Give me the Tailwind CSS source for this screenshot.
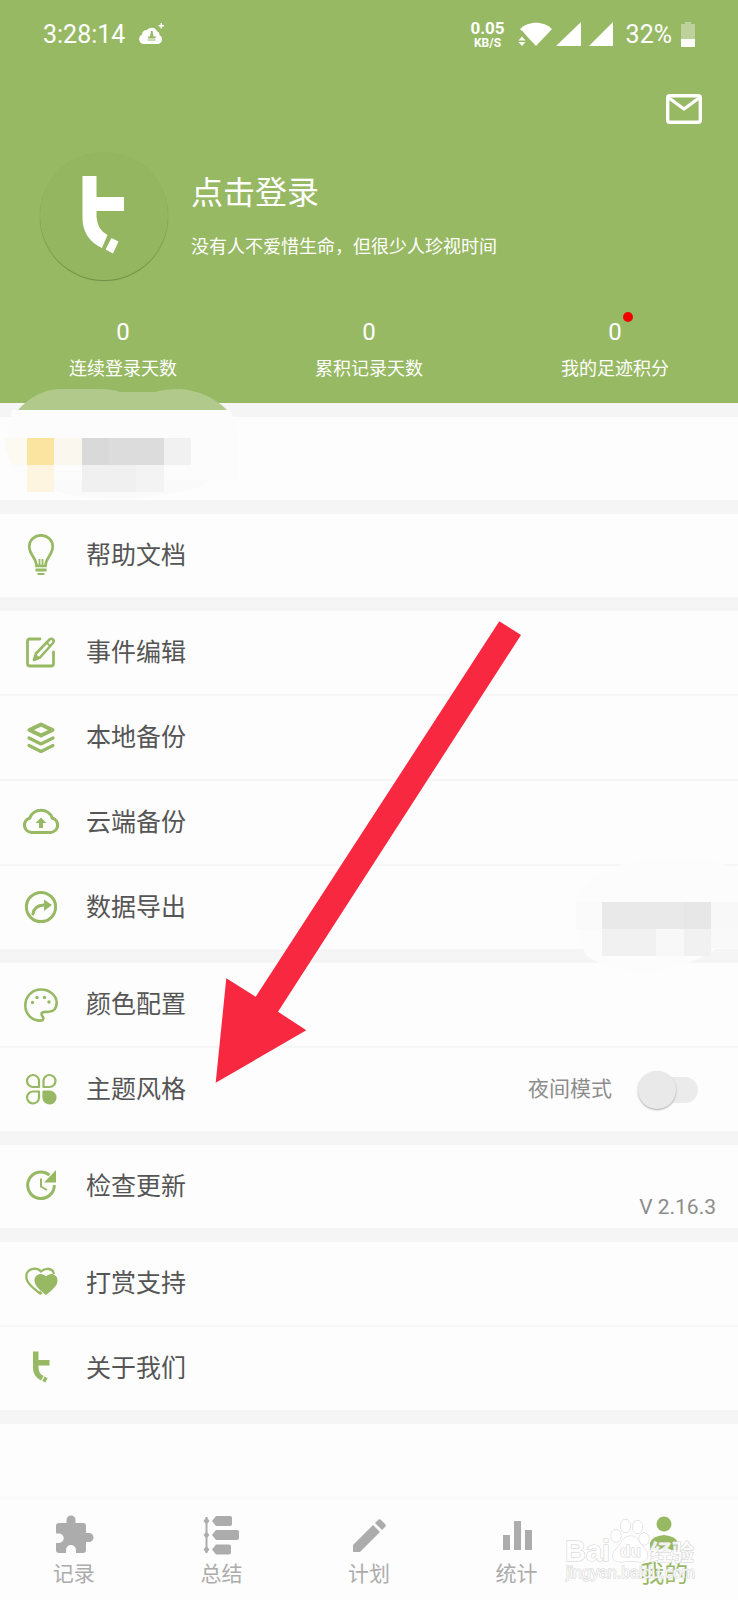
<!DOCTYPE html>
<html lang="zh-CN">
<head>
<meta charset="utf-8">
<meta name="viewport" content="width=device-width, initial-scale=1">
<title>我的</title>
<script src="https://cdn.jsdelivr.net/npm/@tailwindcss/browser@4"></script>
</head>
<body class="relative flex min-h-screen flex-col overflow-x-hidden bg-[#f5f5f5] font-['Roboto','Noto_Sans_CJK_SC',sans-serif] text-[#555]">

<header class="bg-[#98b964] pb-[21px] text-white">
  <div class="flex h-[68px] items-center justify-between pr-[43px] pl-[43px] text-[25px] leading-none">
    <div class="flex items-center gap-[14px]">
      <span>3:28:14</span>
      <svg class="h-[22px] w-[26px]" viewBox="0 0 26 22" fill="#fff" aria-hidden="true">
        <path d="M5 21a5 5 0 0 1-2-9.500A5 5 0 0 1 8 7a6 6 0 0 1 10 1 4 4 0 0 1 2.500 4A5 5 0 0 1 20 21z"/>
        <path d="M21.500 0h1.500v2h2v1.500h-2v2h-1.500v-2h-2V2h2z"/>
        <path d="M12 8h1.500l1 5.500h3l-1.500 2h-6.500l-1-2h2.500z M8.500 16.500h8v1h-8z" fill="#98b964"/>
      </svg>
    </div>
    <div class="flex items-center">
      <div class="flex flex-col items-center font-bold">
        <span class="text-[17px] leading-[18px]">0.05</span>
        <span class="text-[12px] leading-[12px]">KB/S</span>
      </div>
      <svg class="ml-[13px] h-[24px] w-[96px]" viewBox="0 0 96 24" fill="#fff" aria-hidden="true">
        <path d="M2 7C10-1.500 26-1.500 34 7L18 24z"/>
        <path d="M-1 15.500l5-7 6 7.500v8H-1z" fill="#98b964"/>
        <path d="M.5 18.500L4 14.500l3.500 4zM.5 20h7L4 24z"/>
        <path d="M63 0v24H38zM95 0v24H71z"/>
      </svg>
      <span class="ml-[12px]">32%</span>
      <svg class="ml-[9px] h-[25px] w-[14px]" viewBox="0 0 14 25" aria-hidden="true">
        <path d="M0 3q0-1 1-1h3V0h6v2h3q1 0 1 1v15H0z" fill="#bdd29b"/>
        <path d="M0 17h14v8H0z" fill="#fff"/>
      </svg>
    </div>
  </div>

  <div class="flex justify-end pt-[26px] pr-[36px]">
    <button type="button" aria-label="消息">
      <svg class="block h-[30px] w-[36px]" viewBox="0 0 36 30" fill="none" stroke="#fff" stroke-width="3.400" stroke-linejoin="round" aria-hidden="true">
        <rect x="1.700" y="1.700" width="32.600" height="26.600" rx="2"/>
        <path d="M3 4l15 11L33 4"/>
      </svg>
    </button>
  </div>

  <div class="mt-[28px] flex items-center gap-[23px] pl-[40px]">
    <svg class="h-[128px] w-[128px] rounded-full bg-[#95b661] shadow-[0_1px_1px_#6f8c42]" viewBox="0 0 128 128" aria-hidden="true">
      <path d="M42.500 24h14v21h27.500v14H56.500v6q1 13 11 18L62 96Q43 87 42.500 67zM71.500 86l7 3.500-5.500 12-7.500-4z" fill="#fff"/>
    </svg>
    <div class="flex flex-col gap-[18px]">
      <a href="#login" class="text-[32px] leading-[44px]">点击登录</a>
      <p class="text-[18px] leading-[28px]">没有人不爱惜生命，但很少人珍视时间</p>
    </div>
  </div>

  <dl class="mt-[36px] grid grid-cols-3 text-center">
    <div class="flex flex-col-reverse gap-[8px]">
      <dt class="text-[18px] leading-[26px]">连续登录天数</dt>
      <dd class="text-[24px] leading-[32px]">0</dd>
    </div>
    <div class="flex flex-col-reverse gap-[8px]">
      <dt class="text-[18px] leading-[26px]">累积记录天数</dt>
      <dd class="text-[24px] leading-[32px]">0</dd>
    </div>
    <div class="flex flex-col-reverse gap-[8px]">
      <dt class="text-[18px] leading-[26px]">我的足迹积分</dt>
      <dd class="text-[24px] leading-[32px]"><span class="relative">0<i class="absolute -top-[6px] -right-[11px] h-[10px] w-[10px] rounded-full bg-[#f00000]"></i></span></dd>
    </div>
  </dl>
</header>

<main class="flex flex-1 flex-col gap-[14px] pt-[14px] text-[25px]">

  <section class="relative h-[83px] bg-[#fdfdfd]">
    <svg class="absolute -top-[28px] left-0 h-[116px] w-[245px]" viewBox="0 0 245 116" aria-hidden="true">
      <path d="M12 21h218q3 5 8 20v50H35Q14 84 8 72V50z" fill="#fcfcfc"/>
      <path d="M35 91h175l-12 8q-50 11-80 10-60 1-83-18z" fill="#fafafa"/>
      <path d="M18 21Q35 2 58 0h40q15 0 22 3h35q10-3 26-3 28 3 46 21z" fill="#b1ca8b"/>
      <g shape-rendering="crispEdges">
        <path d="M5 49h22v27H14q-6-8-9-14z" fill="#fdfaf3"/>
        <path d="M27 49h27v27H27z" fill="#fbe4a0"/>
        <path d="M54 49h28v27H54z" fill="#faf8ee"/>
        <path d="M82 49h27v27H82z" fill="#d9d9d9"/>
        <path d="M109 49h55v27h-55z" fill="#dcdcdc"/>
        <path d="M164 49h27v27h-27z" fill="#f1f1f1"/>
        <path d="M27 76h27v27H27z" fill="#fdf5df"/>
        <path d="M82 76h54v27H82z" fill="#f0f0f0"/>
        <path d="M136 76h28v27h-28z" fill="#f3f3f3"/>
      </g>
    </svg>
  </section>

  <section class="bg-[#fdfdfd]">
    <a href="#help" class="flex h-[83px] items-center gap-[23px] pl-[19px]">
      <svg class="h-[44px] w-[44px]" viewBox="0 0 44 44" fill="none" stroke="#98b964" stroke-width="2.700" aria-hidden="true">
        <path d="M17.500 32C17.500 24 10.300 21 10.300 12.500a11.700 11.200 0 0 1 23.400 0C33.700 21 26.500 24 26.500 32z"/>
        <path d="M20.500 25v7M23.500 25v7" stroke-width="1.800"/>
        <path d="M16.500 36h11" stroke-width="3"/><path d="M18.500 40h7" stroke-width="2"/>
      </svg>
      <span>帮助文档</span>
    </a>
  </section>

  <section class="relative bg-[#fdfdfd]">
    <div class="divide-y-2 divide-[#f6f6f6]">
      <a href="#events" class="box-content flex h-[83px] items-center gap-[23px] pl-[19px]">
        <svg class="h-[44px] w-[44px]" viewBox="0 0 44 44" fill="none" stroke="#98b964" stroke-width="2.800" stroke-linecap="round" stroke-linejoin="round" aria-hidden="true">
          <path d="M21 8H11Q8.500 8 8.500 10.500v22q0 2.500 2.500 2.500h21q2.500 0 2.500-2.500V21"/>
          <path d="M15 29l2-6.500L30.500 8.500q2-1.500 3.500 0t0 3.500L21 26.500z" stroke-width="2.600"/>
          <path d="M15 29l2-5 3 3z" stroke-width="1.500" fill="#98b964"/>
          <path d="M28 12l3 3" stroke-width="1.800"/>
        </svg>
        <span>事件编辑</span>
      </a>
      <a href="#local" class="box-content flex h-[83px] items-center gap-[23px] pl-[19px]">
        <svg class="h-[44px] w-[44px]" viewBox="0 0 44 44" fill="none" stroke="#98b964" stroke-width="4" stroke-linejoin="round" aria-hidden="true">
          <path d="M22 8.500L33.500 14 22 19.500 10.500 14z"/>
          <path d="M10 22l12 6 12-6M10 29.500l12 6 12-6" stroke-linecap="round" stroke-width="3.200"/>
        </svg>
        <span>本地备份</span>
      </a>
      <a href="#cloud" class="box-content flex h-[83px] items-center gap-[23px] pl-[19px]">
        <svg class="h-[44px] w-[44px]" viewBox="0 0 44 44" fill="none" stroke="#98b964" stroke-width="3" aria-hidden="true">
          <path d="M13 31.500a7.500 7.500 0 0 1-1.500-14.500 11 11 0 0 1 21 0A7.500 7.500 0 0 1 31 31.500z" transform="translate(-1.500 0) scale(1.070 1)"/>
          <path d="M22 16.500l5.500 5.500h-3.500v5h-4v-5h-3.500z" fill="#98b964" stroke="none"/>
        </svg>
        <span>云端备份</span>
      </a>
      <a href="#export" class="box-content flex h-[83px] items-center gap-[23px] pl-[19px]">
        <svg class="h-[44px] w-[44px]" viewBox="0 0 44 44" fill="none" stroke="#98b964" stroke-width="3" aria-hidden="true">
          <circle cx="22" cy="21" r="14.600"/>
          <path d="M14 28q1-8.500 11-9" stroke-linecap="round"/>
          <path d="M25 13.500l8 5.500-8 6z" fill="#98b964" stroke="none"/>
        </svg>
        <span>数据导出</span>
      </a>
    </div>
    <svg class="absolute right-0 -bottom-[26px] h-[116px] w-[190px]" viewBox="0 0 190 116" aria-hidden="true">
      <path d="M28 42Q40 12 90 2h70q20 3 30 8v80h-22q-30 20-70 22Q58 112 38 96q-8-14-10-48z" fill="#fcfcfc"/>
      <g shape-rendering="crispEdges">
        <path d="M28 43h26v28H28z" fill="#fafafa"/>
        <path d="M54 43h82v27H54z" fill="#e9e9e9"/><path d="M136 43h27v27h-27z" fill="#e7e7e7"/>
        <path d="M163 43h27v27h-27z" fill="#f8f8f8"/>
        <path d="M54 70h54v27H54zM136 70h27v27h-27z" fill="#f1f1f1"/>
        <path d="M108 70h28v27h-28z" fill="#f8f8f8"/><path d="M163 70h27v19h-27z" fill="#f9f9f9"/>
      </g>
    </svg>
  </section>

  <section class="divide-y-2 divide-[#f6f6f6] bg-[#fdfdfd]">
    <a href="#colors" class="box-content flex h-[83px] items-center gap-[23px] pl-[19px]">
      <svg class="h-[44px] w-[44px]" viewBox="0 0 44 44" fill="none" stroke="#98b964" stroke-width="2.600" stroke-linejoin="round" aria-hidden="true">
        <path d="M23 37.500C13 38.500 6.300 31 6.300 22.500 6.300 13.500 13 6.500 22 6.500S37.700 13 37.700 20q0 8.500-8.700 9-6-.5-6.500 1.500 0 2 1.500 3.500 1 2.500-1 3.500z"/>
        <g fill="#98b964" stroke="none"><circle cx="13.500" cy="19.500" r="1.700"/><circle cx="18" cy="14.500" r="1.700"/><circle cx="25.500" cy="14.500" r="1.700"/><circle cx="30" cy="19" r="1.700"/></g>
      </svg>
      <span>颜色配置</span>
    </a>
    <div class="box-content flex h-[83px] items-center gap-[23px] pl-[19px]">
      <svg class="h-[44px] w-[44px]" viewBox="0 0 44 44" fill="none" stroke="#98b964" stroke-width="2.200" stroke-linejoin="round" aria-hidden="true">
        <path d="M20 19h-6A6 6 0 1 1 20 12.500z"/>
        <path d="M24.500 19h6A6 6 0 1 0 24.500 12.500z"/>
        <path d="M20 23.500h-6A6 6 0 1 0 20 30z"/>
        <path d="M24.500 23.500h6A6 6 0 1 1 24.500 30z" fill="#98b964"/>
      </svg>
      <a href="#theme">主题风格</a>
      <label class="mr-[40px] ml-auto flex items-center gap-[26px] text-[21px] text-[#8c8c8c]">
        夜间模式
        <input type="checkbox" role="switch" class="relative h-[26px] w-[60px] appearance-none before:absolute before:inset-y-0 before:right-0 before:w-[48px] before:rounded-full before:bg-[#ebebeb] after:absolute after:-top-[6px] after:left-0 after:h-[38px] after:w-[38px] after:rounded-full after:bg-[#e9e9e9] after:shadow-[0_1px_2px_#aaa]">
      </label>
    </div>
  </section>

  <section class="bg-[#fdfdfd]">
    <a href="#update" class="flex h-[83px] items-center gap-[23px] pl-[19px]">
      <svg class="h-[44px] w-[44px]" viewBox="0 0 44 44" fill="none" stroke="#98b964" stroke-width="3" aria-hidden="true">
        <path d="M30.500 10A13.300 13.300 0 1 0 35.300 20"/>
        <path d="M37 5v12.500H25z" fill="#98b964" stroke="none"/>
        <path d="M22 13.500v8l6 3.500" stroke-width="2"/>
      </svg>
      <span>检查更新</span>
      <span class="mr-[22px] ml-auto self-end pb-[6px] text-[21px] leading-[30px] text-[#8c8c8c]">V 2.16.3</span>
    </a>
  </section>

  <section class="divide-y-2 divide-[#f6f6f6] bg-[#fdfdfd]">
    <a href="#donate" class="box-content flex h-[83px] items-center gap-[23px] pl-[19px]">
      <svg class="h-[44px] w-[44px]" viewBox="0 0 44 44" aria-hidden="true">
        <path d="M21 31.500C14 26 7.300 21 7.300 14.500 7.300 7 17 4 22 9.500 27 5 34 6.500 35 12" fill="none" stroke="#98b964" stroke-width="2.300"/>
        <path d="M27 33C21 28 15.500 24 15.500 18.500c0-7 8-8.500 11.500-4 3.500-4.500 11.500-3 11.500 4C38.500 24 33 28 27 33z" fill="#98b964"/>
        <path d="M19.500 31l1.500-2.500 2.500 3-2 1.500z" fill="#98b964"/>
      </svg>
      <span>打赏支持</span>
    </a>
    <a href="#about" class="box-content flex h-[83px] items-center gap-[23px] pl-[19px]">
      <svg class="h-[44px] w-[44px]" viewBox="0 0 44 44" fill="#98b964" aria-hidden="true">
        <path d="M14 4.500h5.500V13h11v5.500h-11v2q0 6 5 8.500L22 33.500q-8-4-8-12.500zM25.500 29.500l3 1.500-2.200 4.500-3-1.500z"/>
      </svg>
      <span>关于我们</span>
    </a>
  </section>

  <div class="flex-1 bg-[#fdfdfd]"></div>
</main>

<nav class="grid grid-cols-5 border-t-4 border-[#fafafa] bg-[#fdfdfd] pt-[14px] pb-[10px] text-[21px] leading-[32px] text-[#acacac]">
  <a href="#record" class="flex flex-col items-center">
    <svg class="h-[44px] w-[44px]" viewBox="0 0 44 44" fill="currentColor" aria-hidden="true">
      <path d="M4 12q0-3 3-3h7.500V6a4.500 4.500 0 0 1 9 0v3H31q3 0 3 3v7h3a4.500 4.500 0 0 1 0 9h-3v8q0 3-3 3h-7v-3a5 5 0 0 0-10 0v3H7q-3 0-3-3v-7h3a4.500 4.500 0 0 0 0-9.500H4z"/>
    </svg>
    记录
  </a>
  <a href="#summary" class="flex flex-col items-center">
    <svg class="h-[44px] w-[44px]" viewBox="0 0 44 44" fill="currentColor" aria-hidden="true">
      <path d="M6.500 3h2v36h-2z"/><path d="M7.500 3l3 4-3 3.500L4.500 7zM7.500 17.500l3 3.500-3 3.500-3-3.500zM7.500 32l3 3.500-3 3.500-3-3.500z"/>
      <path d="M13 7l4-5h14q2 0 2 2v6q0 2-2 2H17zM13 21l4-5h21q2 0 2 2v6q0 2-2 2H17zM13 35.500l4-5h13q2 0 2 2v6q0 2-2 2H17z"/>
    </svg>
    总结
  </a>
  <a href="#plan" class="flex flex-col items-center">
    <svg class="h-[44px] w-[44px]" viewBox="0 0 44 44" fill="currentColor" aria-hidden="true">
      <path d="M6 31L26 11l7 7-20 20H6z"/><path d="M28 9l3-3q1.500-1.500 3 0l4 4q1.500 1.500 0 3l-3 3z"/>
    </svg>
    计划
  </a>
  <a href="#stats" class="flex flex-col items-center">
    <svg class="h-[44px] w-[44px]" viewBox="0 0 44 44" fill="currentColor" aria-hidden="true">
      <path d="M8 21h7v15H8zM19 7h7v29h-7zM30 16h7v20h-7z"/>
    </svg>
    统计
  </a>
  <a href="#me" aria-current="page" class="flex flex-col items-center text-[24px] text-[#98b964]">
    <svg class="h-[44px] w-[44px]" viewBox="0 0 44 44" fill="currentColor" aria-hidden="true">
      <circle cx="22" cy="10" r="7.500"/><path d="M8 36v-7q2-7 14-8 12 1 14 8v7z"/>
    </svg>
    我的
  </a>
</nav>

<svg class="pointer-events-none absolute top-[621px] left-[215px] h-[462px] w-[307px]" viewBox="215 621 307 462" aria-hidden="true">
  <path d="M499.300 621.300L521 635 278 1011.700 306.300 1030.300 215.700 1082.700 226.300 978.300 255.700 996.700z" fill="#f7283f"/>
</svg>

<svg class="pointer-events-none absolute right-[34px] bottom-[14px] h-[72px] w-[140px] font-['Liberation_Sans','Noto_Sans_CJK_SC',sans-serif]" viewBox="0 0 140 72" fill="#fff" fill-opacity=".85" stroke="#d4d4d4" stroke-width="1" paint-order="stroke" aria-hidden="true">
  <text x="1" y="47" font-size="29" font-weight="700">Bai</text>
  <ellipse cx="52" cy="22" rx="5" ry="6.500"/><ellipse cx="61.500" cy="12" rx="5" ry="6.500"/><ellipse cx="73.500" cy="13" rx="5" ry="6.500"/><ellipse cx="80" cy="25" rx="5" ry="6"/>
  <path d="M67 22q6 0 9 7l7 9q3 9-6 10l-10-1-10 1q-10 0-8-9l7-9q4-8 11-8z"/>
  <text x="56" y="43" font-size="17" font-weight="700">du</text>
  <text x="86" y="46" font-size="22" font-weight="700">经验</text>
  <text x="2" y="64" font-size="16" stroke-width="1">jingyan.baidu.com</text>
</svg>

</body>
</html>
